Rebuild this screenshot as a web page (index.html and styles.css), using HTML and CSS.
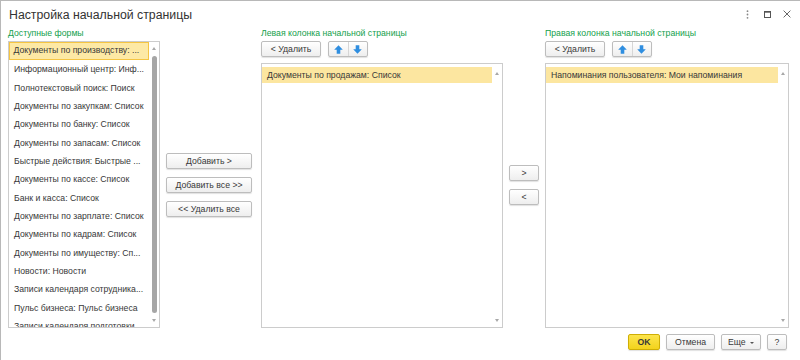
FILE: index.html
```html
<!DOCTYPE html>
<html lang="ru">
<head>
  <meta charset="UTF-8" />
  <meta name="viewport" content="width=device-width, initial-scale=1.0" />
  <title>Настройка начальной страницы</title>
  <link rel="stylesheet" href="styles.css">
</head>
<body>
  <div class="window">
    <div class="header">
      <div class="title">Настройка начальной страницы</div>
      <div class="win-icons">
        <span class="win-icon">
          <svg width="3" height="9" viewBox="0 0 3 9"><circle cx="1.5" cy="1.2" r="0.9" fill="#888"/><circle cx="1.5" cy="4.5" r="0.9" fill="#888"/><circle cx="1.5" cy="7.8" r="0.9" fill="#888"/></svg>
        </span>
        <span class="win-icon">
          <svg width="7" height="7" viewBox="0 0 7 7"><rect x="0.5" y="0.5" width="6" height="6" fill="none" stroke="#555" stroke-width="1"/><line x1="0" y1="1.2" x2="7" y2="1.2" stroke="#555" stroke-width="1"/></svg>
        </span>
        <span class="win-icon">
          <svg width="8" height="8" viewBox="0 0 8 8"><path d="M0.6 0.6 L7.4 7.4 M7.4 0.6 L0.6 7.4" stroke="#666" stroke-width="1"/></svg>
        </span>
      </div>
    </div>

    <div class="main">
      <div class="col col-forms">
        <div class="caption">Доступные формы</div>
        <div class="list">
          <div class="list-items">
            <div class="row row-current">Документы по производству: ...</div>
            <div class="row">Информационный центр: Инф...</div>
            <div class="row">Полнотекстовый поиск: Поиск</div>
            <div class="row">Документы по закупкам: Список</div>
            <div class="row">Документы по банку: Список</div>
            <div class="row">Документы по запасам: Список</div>
            <div class="row">Быстрые действия: Быстрые ...</div>
            <div class="row">Документы по кассе: Список</div>
            <div class="row">Банк и касса: Список</div>
            <div class="row">Документы по зарплате: Список</div>
            <div class="row">Документы по кадрам: Список</div>
            <div class="row">Документы по имуществу: Сп...</div>
            <div class="row">Новости: Новости</div>
            <div class="row">Записи календаря сотрудника...</div>
            <div class="row">Пульс бизнеса: Пульс бизнеса</div>
            <div class="row">Записи календаря подготовки...</div>
          </div>
          <div class="scroll">
            <span class="arrow arrow-up"></span>
            <span class="thumb"></span>
            <span class="arrow arrow-down"></span>
          </div>
        </div>
      </div>

      <div class="move-buttons move-wide">
        <button class="btn">Добавить &gt;</button>
        <button class="btn">Добавить все &gt;&gt;</button>
        <button class="btn">&lt;&lt; Удалить все</button>
      </div>

      <div class="col col-left">
        <div class="caption">Левая колонка начальной страницы</div>
        <div class="toolbar">
          <button class="btn btn-remove">&lt; Удалить</button>
          <div class="btn-group">
            <span class="btn-half">
              <svg width="9" height="9" viewBox="0 0 9 9"><path d="M4.5 0.3 L8.8 4.8 L6.3 4.8 L6.3 8.7 L2.7 8.7 L2.7 4.8 L0.2 4.8 Z" fill="#2f8ee0"/></svg>
            </span>
            <span class="btn-half">
              <svg width="9" height="9" viewBox="0 0 9 9"><path d="M4.5 8.7 L8.8 4.2 L6.3 4.2 L6.3 0.3 L2.7 0.3 L2.7 4.2 L0.2 4.2 Z" fill="#2f8ee0"/></svg>
            </span>
          </div>
        </div>
        <div class="list list-padded">
          <div class="list-items">
            <div class="row row-selected">Документы по продажам: Список</div>
          </div>
          <div class="scroll">
            <span class="arrow arrow-up"></span>
            <span class="thumb thumb-empty"></span>
            <span class="arrow arrow-down"></span>
          </div>
        </div>
      </div>

      <div class="move-buttons move-narrow">
        <button class="btn">&gt;</button>
        <button class="btn">&lt;</button>
      </div>

      <div class="col col-right">
        <div class="caption">Правая колонка начальной страницы</div>
        <div class="toolbar">
          <button class="btn btn-remove">&lt; Удалить</button>
          <div class="btn-group">
            <span class="btn-half">
              <svg width="9" height="9" viewBox="0 0 9 9"><path d="M4.5 0.3 L8.8 4.8 L6.3 4.8 L6.3 8.7 L2.7 8.7 L2.7 4.8 L0.2 4.8 Z" fill="#2f8ee0"/></svg>
            </span>
            <span class="btn-half">
              <svg width="9" height="9" viewBox="0 0 9 9"><path d="M4.5 8.7 L8.8 4.2 L6.3 4.2 L6.3 0.3 L2.7 0.3 L2.7 4.2 L0.2 4.2 Z" fill="#2f8ee0"/></svg>
            </span>
          </div>
        </div>
        <div class="list list-padded">
          <div class="list-items">
            <div class="row row-selected">Напоминания пользователя: Мои напоминания</div>
          </div>
          <div class="scroll">
            <span class="arrow arrow-up"></span>
            <span class="thumb thumb-empty"></span>
            <span class="arrow arrow-down"></span>
          </div>
        </div>
      </div>
    </div>

    <div class="footer">
      <button class="btn btn-ok">OK</button>
      <button class="btn btn-cancel">Отмена</button>
      <button class="btn btn-more">Еще <span class="caret"></span></button>
      <button class="btn btn-help">?</button>
    </div>
  </div>
</body>
</html>
```

FILE: styles.css
```css
* {
  box-sizing: border-box;
}
body {
  margin: 0;
  font-family: "Liberation Sans", Arial, sans-serif;
  color: #333;
  background: #fff;
}
.window {
  width: 800px;
  height: 360px;
  border-top: 1px solid #b8b8b8;
  border-left: 1px solid #b8b8b8;
  display: flex;
  flex-direction: column;
  overflow: hidden;
}

/* header */
.header {
  height: 26px;
  display: flex;
  align-items: center;
  padding: 0 7px 0 8px;
}
.title {
  font-size: 12.3px;
  padding-top: 2px;
  color: #333;
}
.win-icons {
  margin-left: auto;
  display: flex;
  gap: 8px;
}
.win-icon {
  width: 12px;
  height: 12px;
  display: flex;
  align-items: center;
  justify-content: center;
}

/* columns */
.main {
  height: 301px;
  display: flex;
  padding-left: 7px;
}
.col {
  display: flex;
  flex-direction: column;
}
.col-forms {
  width: 152px;
}
.col-left {
  width: 242px;
}
.col-right {
  width: 244px;
  margin-left: 6px;
}
.caption {
  height: 14px;
  font-size: 8.7px;
  line-height: 12px;
  color: #13a04c;
  white-space: nowrap;
}
.toolbar {
  height: 16px;
  margin-bottom: 6px;
  display: flex;
  gap: 7px;
}

/* lists */
.list {
  flex: 1;
  min-height: 0;
  border: 1px solid #cccccc;
  display: flex;
  overflow: hidden;
}
.list-padded {
  padding-top: 3px;
}
.list-items {
  flex: 1;
  min-width: 0;
  overflow: hidden;
}
.row {
  height: 18.33px;
  line-height: 18.33px;
  padding-left: 5px;
  font-size: 8.7px;
  white-space: nowrap;
  overflow: hidden;
  color: #383838;
}
.row-current {
  background: #fde9a5;
  border: 1.5px solid #f5c543;
  line-height: 15.3px;
  padding-left: 3.5px;
}
.row-selected {
  height: 16px;
  line-height: 16px;
  background: #fce6a0;
}
.scroll {
  width: 10px;
  display: flex;
  flex-direction: column;
  align-items: center;
}
.arrow {
  width: 0;
  height: 0;
  border-left: 2.5px solid transparent;
  border-right: 2.5px solid transparent;
}
.arrow-up {
  margin-top: 5px;
  border-bottom: 3px solid #a8a8a8;
}
.arrow-down {
  margin-bottom: 5px;
  border-top: 3px solid #a8a8a8;
}
.thumb {
  flex: 1;
  width: 5px;
  margin: 6px 0;
  background: #a6a6a6;
  border-radius: 3px;
}
.thumb-empty {
  background: none;
}

/* buttons */
.btn {
  height: 16px;
  padding: 0;
  border: 1px solid #bdbdbd;
  border-radius: 2px;
  background: linear-gradient(#ffffff, #eeeeee);
  box-shadow: 0 1px 1px rgba(0, 0, 0, 0.12);
  font-family: "Liberation Sans", Arial, sans-serif;
  font-size: 8.7px;
  color: #383838;
  cursor: pointer;
}
.move-buttons {
  display: flex;
  flex-direction: column;
  justify-content: center;
  gap: 8px;
  margin-top: 14px;
}
.move-wide {
  width: 86px;
  margin-left: 6px;
  margin-right: 9px;
}
.move-narrow {
  width: 30px;
  margin-left: 6px;
}
.btn-remove {
  width: 60px;
}
.btn-group {
  width: 40px;
  height: 16px;
  display: flex;
  border: 1px solid #bdbdbd;
  border-radius: 2px;
  background: linear-gradient(#ffffff, #eeeeee);
  box-shadow: 0 1px 1px rgba(0, 0, 0, 0.12);
}
.btn-half {
  flex: 1;
  display: flex;
  align-items: center;
  justify-content: center;
}
.btn-half + .btn-half {
  border-left: 1px solid #d6d6d6;
}

/* footer */
.footer {
  flex: 1;
  display: flex;
  justify-content: flex-end;
  align-items: flex-start;
  gap: 6px;
  padding: 6px 13px 0 0;
}
.btn-ok {
  width: 32px;
  font-weight: bold;
  background: linear-gradient(#fce44c, #f3d31c);
  border-color: #cfae05;
}
.btn-cancel {
  width: 49px;
}
.btn-more {
  width: 40px;
}
.caret {
  display: inline-block;
  width: 0;
  height: 0;
  margin-left: 2px;
  vertical-align: middle;
  border-left: 2px solid transparent;
  border-right: 2px solid transparent;
  border-top: 2px solid #555;
}
.btn-help {
  width: 20px;
}
```
